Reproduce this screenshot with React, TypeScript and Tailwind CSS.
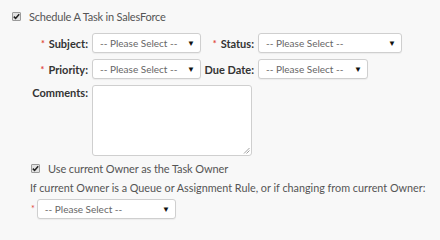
import React from "react";

const font = { fontFamily: 'Lato, "Liberation Sans", Arial, sans-serif' };

function Check() {
  return (
    <span className="inline-flex h-[9px] w-[9px] shrink-0 items-center justify-center rounded-[1px] border border-[#9a9a9a] bg-[#e3e3e3]">
      <svg width="7" height="7" viewBox="0 0 7 7">
        <path d="M0.8 3.6 L2.6 5.4 L6.2 1.2" fill="none" stroke="#222" strokeWidth="1.5" />
      </svg>
    </span>
  );
}

function Select({ w }: { w: string }) {
  return (
    <div
      className={`${w} flex h-[20px] shrink-0 items-center justify-between overflow-hidden whitespace-nowrap rounded-[3px] border border-[#cfcfcf] bg-white pl-[7px] pr-[5px] text-[10px] leading-none text-[#666] shadow-[0_1px_1px_rgba(0,0,0,0.05)]`}
    >
      <span>-- Please Select --</span>
      <span className="text-[8px] leading-none text-[#111]">▼</span>
    </div>
  );
}

function Label({ text, req, w }: { text: string; req?: boolean; w: string }) {
  return (
    <div className={`${w} flex shrink-0 items-center justify-end whitespace-nowrap pr-[4px] text-[11px] font-bold leading-none text-[#333]`}>
      {req && <span className="mr-[4px] text-[9px] text-[#e0463a]">*</span>}
      <span>{text}</span>
    </div>
  );
}

export default function App() {
  return (
    <div className="h-[240px] w-[440px] overflow-hidden bg-[#f8f8f8] pl-[12px] pt-[10px] text-[#444]" style={font}>
      <div className="flex h-[12px] items-center gap-[8px] whitespace-nowrap text-[11px] leading-none tracking-[-0.2px] text-[#555]">
        <Check />
        <span>Schedule A Task in SalesForce</span>
      </div>
      <div className="mt-[11px] flex flex-col gap-[6px]">
        <div className="flex items-center">
          <Label text="Subject:" w="w-[80px]" req />
          <Select w="w-[109px]" />
          <Label text="Status:" w="w-[57px]" req />
          <Select w="w-[144px]" />
        </div>
        <div className="flex items-center">
          <Label text="Priority:" w="w-[80px]" req />
          <Select w="w-[109px]" />
          <Label text="Due Date:" w="w-[57px]" />
          <Select w="w-[110px]" />
        </div>
        <div className="flex items-start">
          <div className="pt-[2px]">
            <Label text="Comments:" w="w-[80px]" />
          </div>
          <div className="relative h-[71px] w-[160px] rounded-[3px] border border-[#cfcfcf] bg-white">
            <svg className="absolute bottom-[1px] right-[1px]" width="7" height="7" viewBox="0 0 7 7">
              <path d="M1 6.5 L6.5 1 M3.5 6.5 L6.5 3.5" stroke="#888" strokeWidth="0.8" />
            </svg>
          </div>
        </div>
      </div>
      <div className="ml-[19px] mt-[6px] flex h-[12px] items-center gap-[8px] whitespace-nowrap text-[11px] leading-none tracking-[-0.1px] text-[#555]">
        <Check />
        <span>Use current Owner as the Task Owner</span>
      </div>
      <div className="ml-[18px] mt-[9px] whitespace-nowrap text-[10.8px] leading-none text-[#555]">
        If current Owner is a Queue or Assignment Rule, or if changing from current Owner:
      </div>
      <div className="ml-[19px] mt-[5px] flex items-center gap-[2px]">
        <span className="text-[9px] leading-none text-[#e0463a]">*</span>
        <Select w="w-[139px]" />
      </div>
    </div>
  );
}
